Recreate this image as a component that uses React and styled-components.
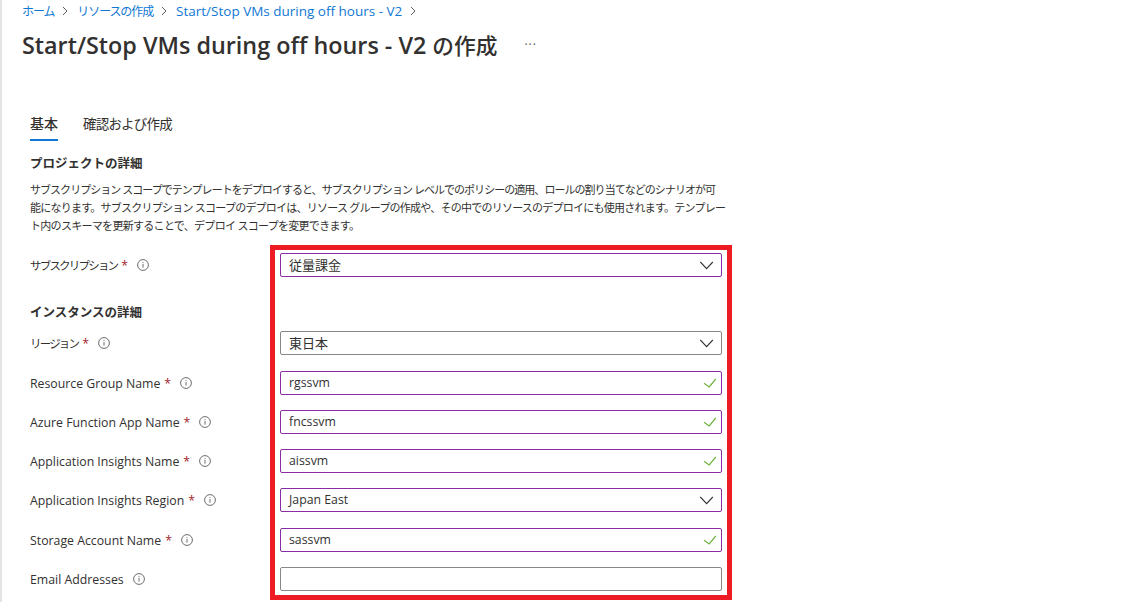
import React from "react";
import styled, { createGlobalStyle } from "styled-components";

const FONT = `"Open Sans", "Noto Sans CJK JP", sans-serif`;

const Global = createGlobalStyle`
  html, body { margin: 0; padding: 0; background: #fff; height: 100%; overflow: hidden; }
  body { font-family: ${FONT}; color: #323130; }
`;

const Page = styled.div`
  position: relative;
  width: 1126px;
  height: 602px;
  overflow: hidden;
  box-sizing: border-box;
  border-left: 2px solid #e4e4e4;
  padding-left: 20px;
`;

const Crumbs = styled.nav`
  display: flex;
  align-items: center;
  height: 22px;
  font-size: 13.5px;
  color: #0f78d4;
`;

const Crumb = styled.span`
  white-space: nowrap;
  font-size: ${(p) => (p.$cjk ? "12px" : "inherit")};
  letter-spacing: ${(p) => (p.$cjk ? "-1.1px" : "0")};
`;

const Chevron = styled.svg`
  width: 6px;
  height: 10px;
  margin: 0 9px 0 8px;
  fill: none;
  stroke: #605e5c;
  stroke-width: 1;
`;

const TitleRow = styled.div`
  display: flex;
  align-items: center;
  height: 40px;
  margin-top: 3px;
`;

const Title = styled.h1`
  margin: 0;
  font-size: 23.35px;
  font-weight: 600;
  color: #323130;
  white-space: nowrap;
  line-height: 40px;
`;

const TitleCjk = styled.span`
  font-size: 21.7px;
  font-weight: 500;
`;

const More = styled.span`
  margin-left: 27px;
  font-size: 12px;
  letter-spacing: 1px;
  color: #555;
  line-height: 1;
`;

const Tabs = styled.div`
  display: flex;
  gap: 25px;
  margin: 46px 0 0 8px;
  height: 30px;
`;

const Tab = styled.div`
  font-size: ${(p) => (p.$active ? "14px" : "13.5px")};
  letter-spacing: ${(p) => (p.$active ? "0" : "-0.8px")};
  line-height: 26px;
  height: 30px;
  box-sizing: border-box;
  color: #323130;
  font-weight: ${(p) => (p.$active ? 500 : 400)};
  border-bottom: 2px solid ${(p) => (p.$active ? "#0f78d4" : "transparent")};
  white-space: nowrap;
`;

const Content = styled.div`
  padding-left: 8px;
`;

const Heading = styled.h2`
  margin: ${(p) => p.$top}px 0 0;
  font-size: 12.5px;
  font-weight: 600;
  line-height: 20px;
  color: #323130;
  white-space: nowrap;
`;

const Description = styled.p`
  margin: 7px 0 0;
  font-size: 11px;
  line-height: 18px;
  color: #323130;
  white-space: nowrap;
`;

const DescLine = styled.span`
  display: block;
  letter-spacing: ${(p) => p.$track}px;
`;

const Row = styled.div`
  display: grid;
  grid-template-columns: 250px 442px;
  align-items: center;
  height: 24px;
  margin-top: ${(p) => p.$top}px;
`;

const Label = styled.label`
  display: flex;
  align-items: center;
  font-size: 12.3px;
  color: #323130;
  white-space: nowrap;
`;

const LabelText = styled.span`
  font-size: ${(p) => (p.$cjk ? "11.5px" : "inherit")};
  letter-spacing: ${(p) => (p.$cjk ? "-1.8px" : "0")};
`;

const Star = styled.span`
  color: #a4262c;
  margin-left: 4px;
`;

const InfoIcon = styled.svg`
  width: 12px;
  height: 12px;
  margin-left: 9px;
  flex: none;
`;

const Field = styled.div`
  display: flex;
  align-items: center;
  justify-content: space-between;
  box-sizing: border-box;
  height: 24px;
  padding: 0 5px 0 8px;
  border: 1px solid ${(p) => (p.$touched ? "#8a2da5" : "#8a8886")};
  border-radius: 2px;
  font-size: ${(p) => (p.$cjk ? "13px" : "12.3px")};
  color: #323130;
  background: #fff;
`;

const Value = styled.span`
  margin-bottom: 2px;
`;

const FieldIcon = styled.svg`
  width: 16px;
  height: 12px;
  flex: none;
  fill: none;
`;

const Annotation = styled.div`
  position: absolute;
  left: 268px;
  top: 245px;
  width: 462px;
  height: 355px;
  box-sizing: border-box;
  border: 5px solid #ed1c24;
  pointer-events: none;
`;

const Sep = () => (
  <Chevron viewBox="0 0 6 10">
    <path d="M1 1l4 4-4 4" />
  </Chevron>
);

const Info = () => (
  <InfoIcon viewBox="0 0 12 12">
    <circle cx="6" cy="6" r="5.4" fill="none" stroke="#6e6d6b" strokeWidth="1" />
    <rect x="5.5" y="5" width="1" height="3.6" fill="#6e6d6b" />
    <rect x="5.5" y="3.1" width="1" height="1" fill="#6e6d6b" />
  </InfoIcon>
);

const Down = () => (
  <FieldIcon viewBox="0 0 16 12" stroke="#323130" strokeWidth="1.1">
    <path d="M0.3 3L6.6 9.6L12.8 3" />
  </FieldIcon>
);

const Check = () => (
  <FieldIcon viewBox="0 0 16 12" stroke="#6db33f" strokeWidth="1.2">
    <path d="M4 6.3L9.2 10L15.8 2" />
  </FieldIcon>
);

const rows = [
  { label: "Resource Group Name", value: "rgssvm", req: true, top: 16, touched: true, icon: "check" },
  { label: "Azure Function App Name", value: "fncssvm", req: true, top: 15, touched: true, icon: "check" },
  { label: "Application Insights Name", value: "aissvm", req: true, top: 15, touched: true, icon: "check" },
  { label: "Application Insights Region", value: "Japan East", req: true, top: 15, touched: true, icon: "down" },
  { label: "Storage Account Name", value: "sassvm", req: true, top: 16, touched: true, icon: "check" },
  { label: "Email Addresses", value: "", req: false, top: 15, touched: false, icon: null },
];

const FormRow = ({ label, value, req, top, touched, icon, cjk }) => (
  <Row $top={top}>
    <Label>
      <LabelText $cjk={cjk}>{label}</LabelText>
      {req && <Star>*</Star>}
      <Info />
    </Label>
    <Field $touched={touched} $cjk={cjk}>
      <Value>{value}</Value>
      {icon === "check" && <Check />}
      {icon === "down" && <Down />}
    </Field>
  </Row>
);

export default function App() {
  return (
    <>
      <Global />
      <Page>
        <Crumbs>
          <Crumb $cjk>ホーム</Crumb>
          <Sep />
          <Crumb $cjk>リソースの作成</Crumb>
          <Sep />
          <Crumb>Start/Stop VMs during off hours - V2</Crumb>
          <Sep />
        </Crumbs>
        <TitleRow>
          <Title>
            Start/Stop VMs during off hours - V2 <TitleCjk>の作成</TitleCjk>
          </Title>
          <More>···</More>
        </TitleRow>
        <Tabs>
          <Tab $active>基本</Tab>
          <Tab>確認および作成</Tab>
        </Tabs>
        <Content>
          <Heading $top={13}>プロジェクトの詳細</Heading>
          <Description>
            <DescLine $track={-0.96}>
              サブスクリプション スコープでテンプレートをデプロイすると、サブスクリプション レベルでのポリシーの適用、ロールの割り当てなどのシナリオが可
            </DescLine>
            <DescLine $track={-0.76}>
              能になります。サブスクリプション スコープのデプロイは、リソース グループの作成や、その中でのリソースのデプロイにも使用されます。テンプレー
            </DescLine>
            <DescLine $track={-0.7}>ト内のスキーマを更新することで、デプロイ スコープを変更できます。</DescLine>
          </Description>
          <FormRow label="サブスクリプション" value="従量課金" req top={18} touched icon="down" cjk />
          <Heading $top={26}>インスタンスの詳細</Heading>
          <FormRow label="リージョン" value="東日本" req top={8} icon="down" cjk />
          {rows.map((r) => (
            <FormRow key={r.label} {...r} />
          ))}
        </Content>
        <Annotation />
      </Page>
    </>
  );
}
